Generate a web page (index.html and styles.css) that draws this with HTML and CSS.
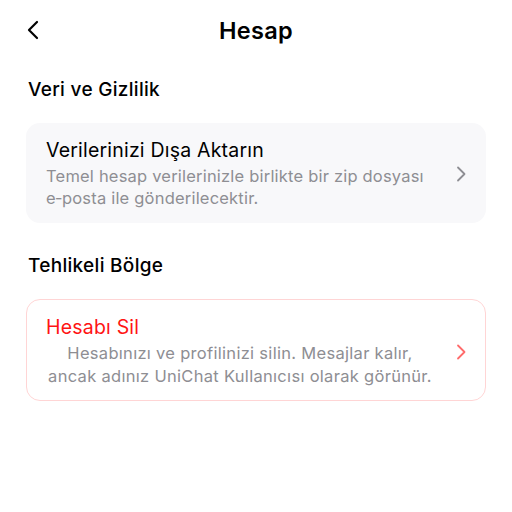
FILE: index.html
```html
<!DOCTYPE html>
<html lang="tr">
<head>
<meta charset="utf-8">
<title>Hesap</title>
<link rel="stylesheet" href="styles.css">
</head>
<body>
<div class="screen">
  <header class="nav">
    <button class="back" aria-label="Geri">
      <svg width="14" height="20" viewBox="0 0 14 20"><path d="M11 2 L3 10 L11 18" fill="none" stroke="#000" stroke-width="2.2" stroke-linecap="round" stroke-linejoin="round"/></svg>
    </button>
    <h1 class="nav-title">Hesap</h1>
  </header>

  <section class="section">
    <h2 class="section-title">Veri ve Gizlilik</h2>
    <div class="card">
      <div class="card-text">
        <div class="card-title">Verilerinizi Dışa Aktarın</div>
        <div class="card-desc">Temel hesap verilerinizle birlikte bir zip dosyası e&#8209;posta ile gönderilecektir.</div>
      </div>
      <svg class="chev" width="10" height="16" viewBox="0 0 10 16"><path d="M2 1.5 L8.5 8 L2 14.5" fill="none" stroke="#8e8e93" stroke-width="1.8" stroke-linecap="round" stroke-linejoin="round"/></svg>
    </div>
  </section>

  <section class="section danger-section">
    <h2 class="section-title">Tehlikeli Bölge</h2>
    <div class="card card-danger">
      <div class="card-text">
        <div class="card-title danger">Hesabı Sil</div>
        <div class="card-desc center">Hesabınızı ve profilinizi silin. Mesajlar kalır, ancak adınız UniChat Kullanıcısı olarak görünür.</div>
      </div>
      <svg class="chev" width="10" height="16" viewBox="0 0 10 16"><path d="M2 1.5 L8.5 8 L2 14.5" fill="none" stroke="#ff6b6b" stroke-width="1.8" stroke-linecap="round" stroke-linejoin="round"/></svg>
    </div>
  </section>
</div>
</body>
</html>
```

FILE: styles.css
```css
html, body {
  margin: 0;
  padding: 0;
  background: #ffffff;
}
body {
  font-family: Inter, "Noto Sans", "Liberation Sans", sans-serif;
  color: #000;
}
.screen {
  width: 512px;
  padding: 0 26px;
  box-sizing: border-box;
}
.nav {
  height: 60px;
  display: flex;
  align-items: center;
  justify-content: center;
  position: relative;
}
.back {
  position: absolute;
  left: 0;
  top: 20px;
  border: 0;
  background: none;
  padding: 0;
  width: 14px;
  height: 20px;
}
.back svg { display: block; }
.nav-title {
  margin: 0;
  font-size: 23.5px;
  font-weight: 600;
  letter-spacing: 0.3px;
}
.section {
  padding-top: 18px;
}
.danger-section {
  padding-top: 31px;
}
.section-title {
  margin: 0 0 21px 2px;
  font-size: 19px;
  font-weight: 500;
  line-height: 24px;
  letter-spacing: 0.3px;
}
.card {
  display: flex;
  align-items: center;
  background: #f8f8fa;
  border-radius: 14px;
  padding: 16px 20px 14px 20px;
}
.card-danger {
  background: #fff;
  border: 1px solid #ffd5d5;
  padding: 16px 19px 12px 19px;
}
.card-text {
  width: 388px;
  flex: none;
}
.card-title {
  font-size: 19.5px;
  line-height: 22px;
  letter-spacing: 0.2px;
  margin-bottom: 4px;
}
.card-title.danger {
  color: #ff1414;
}
.card-desc {
  font-size: 16.5px;
  line-height: 22px;
  letter-spacing: 0.2px;
  color: #8e8e93;
}
.card-desc.center {
  text-align: center;
  line-height: 23px;
  letter-spacing: 0.3px;
}
.chev {
  flex: none;
  margin-left: 22px;
}
```
